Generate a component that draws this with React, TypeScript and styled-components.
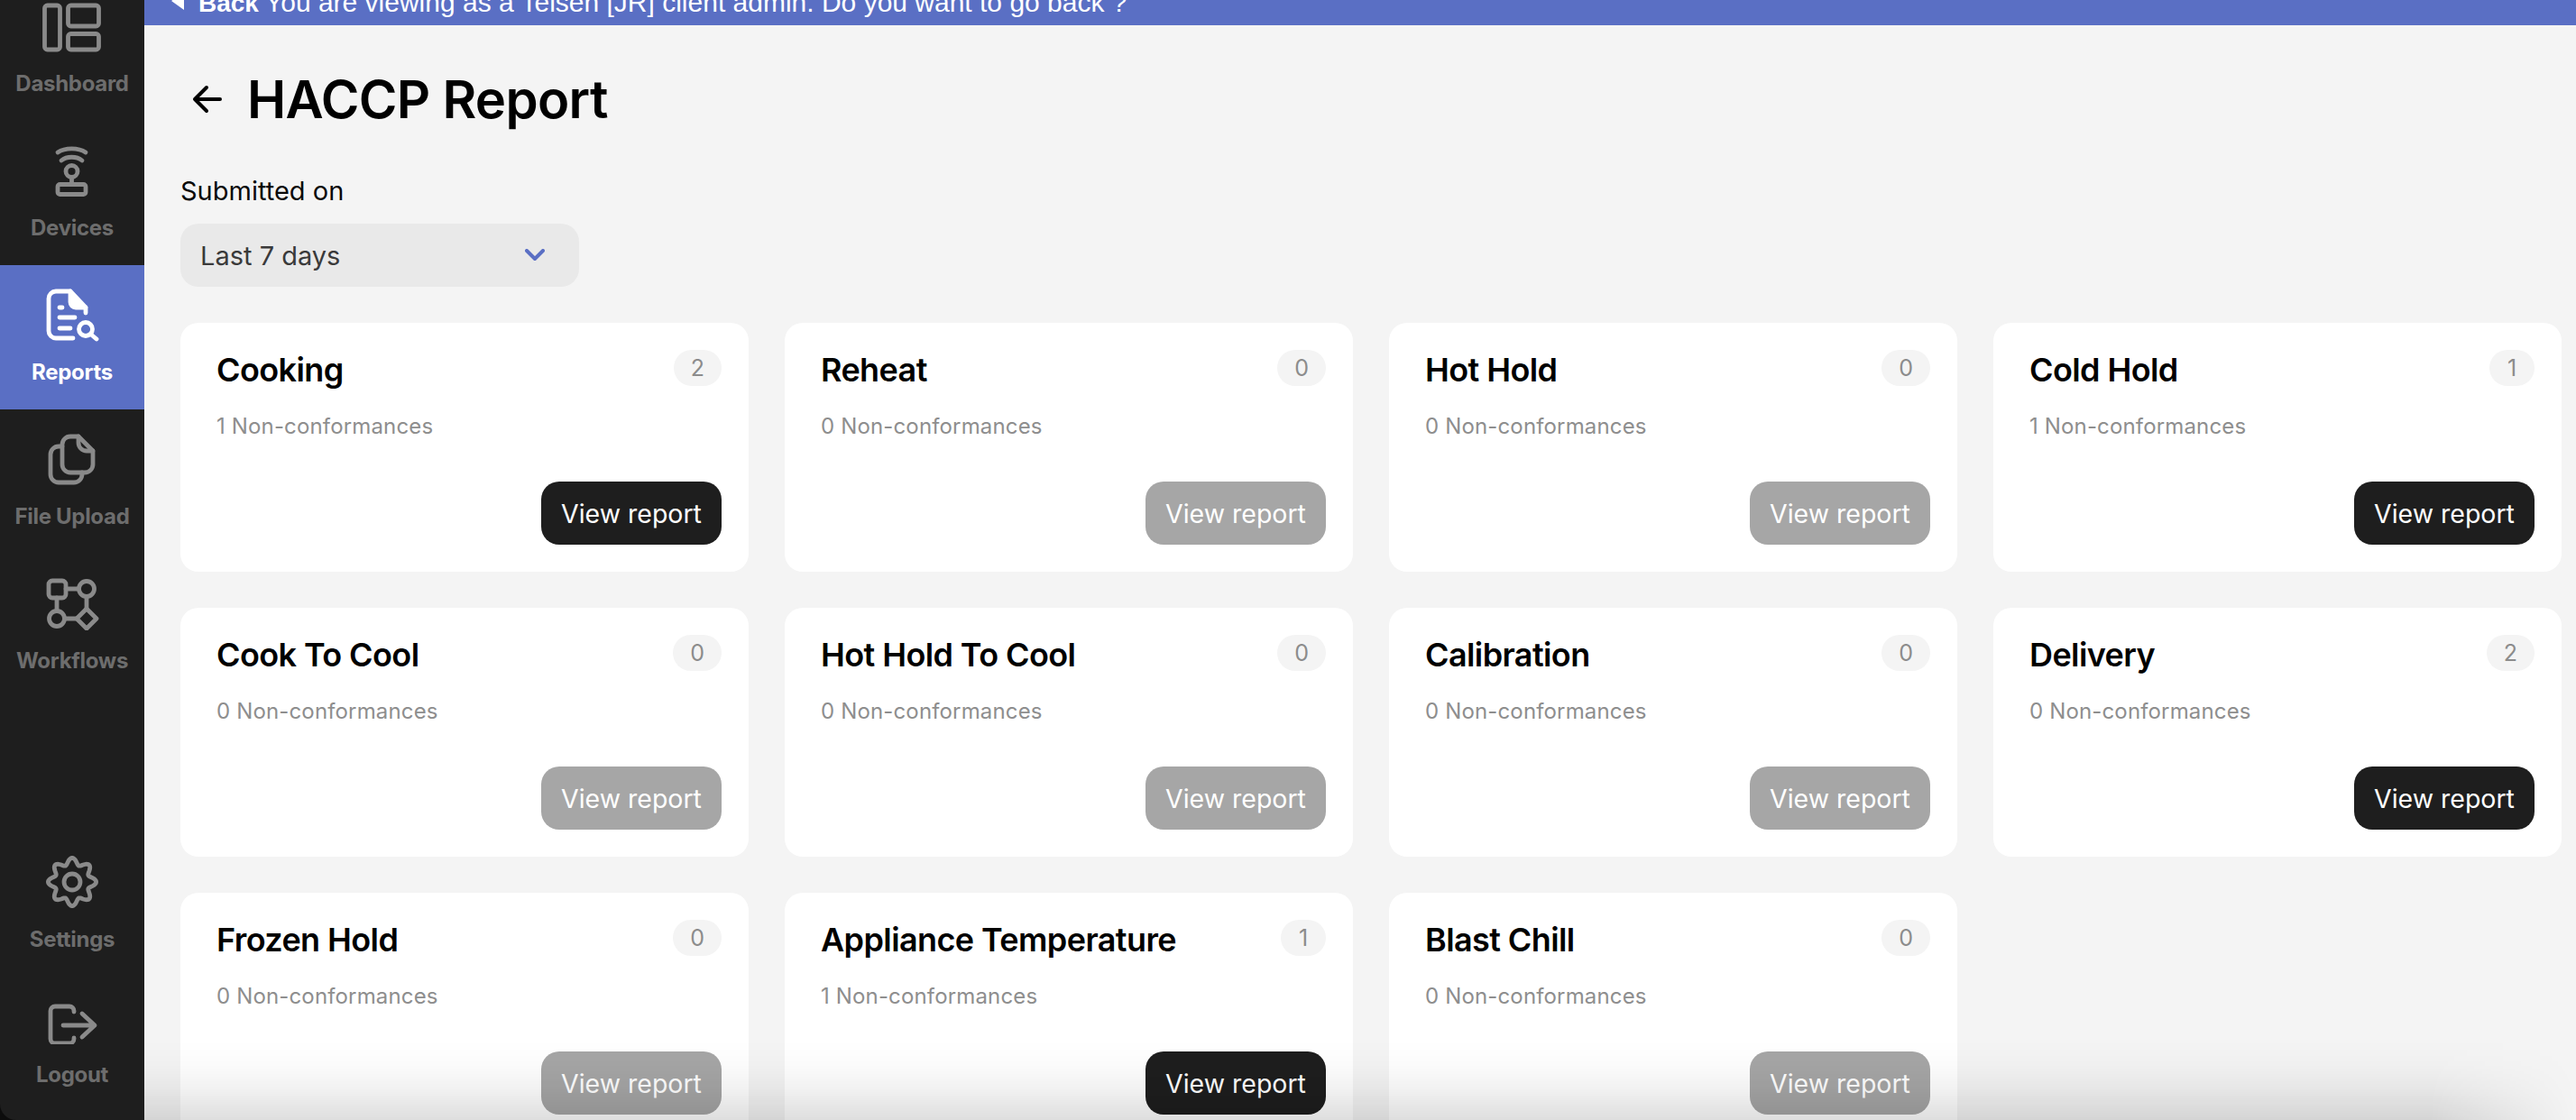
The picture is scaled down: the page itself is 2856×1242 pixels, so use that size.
import React from 'react'
import styled, { createGlobalStyle } from 'styled-components'

const GlobalStyle = createGlobalStyle`
	html, body {
		margin: 0;
		padding: 0;
		background: #0c0c0c;
	}
	* {
		box-sizing: border-box;
	}
`

const FONT = `Inter, "Noto Sans", sans-serif`

const StyledApp = styled.div`
	display: flex;
	width: 2856px;
	height: 1242px;
	overflow: hidden;
	position: relative;
	font-family: ${FONT};
`
const StyledSidebar = styled.nav`
	display: flex;
	flex-direction: column;
	justify-content: space-between;
	flex: 0 0 160px;
	height: 1242px;
	background: #1e1e1e;
	border-bottom-left-radius: 18px;
	padding-bottom: 9px;
`
const StyledNavGroup = styled.div<{ $shift?: number }>`
	display: flex;
	flex-direction: column;
	margin-top: ${(props) => props.$shift || 0}px;
`
const StyledNavItem = styled.a<{ $active?: boolean }>`
	display: flex;
	flex-direction: column;
	align-items: center;
	gap: 18px;
	padding: 25px 0;
	background: ${(props) => (props.$active ? '#5a6fc4' : 'transparent')};
	color: ${(props) => (props.$active ? '#ffffff' : '#8a8a8a')};
`
const StyledNavLabel = styled.span<{ $active?: boolean }>`
	height: 32px;
	font-size: 24px;
	line-height: 32px;
	font-weight: 700;
	white-space: nowrap;
	letter-spacing: -0.3px;
	color: ${(props) => (props.$active ? '#ffffff' : '#6d6d6d')};
`
const StyledMain = styled.main`
	flex: 1;
	min-width: 0;
	background: #f4f4f4;
`
const StyledBanner = styled.div`
	display: flex;
	align-items: flex-end;
	gap: 16px;
	height: 60px;
	margin-top: -32px;
	padding: 0 0 8px 30px;
	background: #5a6fc4;
	color: #ffffff;
	font-family: "Liberation Sans", Arial, sans-serif;
	font-size: 30px;
	line-height: 32px;
	white-space: nowrap;
`
const StyledBannerBack = styled.b`
	font-size: 28px;
	font-weight: 700;
	margin-right: 7px;
`
const StyledTriangle = styled.span`
	width: 0;
	height: 0;
	margin-bottom: 9px;
	border-style: solid;
	border-width: 10px 14px 10px 0;
	border-color: transparent #ffffff transparent transparent;
`
const StyledContent = styled.div`
	padding: 50px 16px 0 40px;
`
const StyledHeader = styled.div`
	display: flex;
	align-items: center;
	gap: 27px;
	height: 64px;
	padding-left: 13px;
`
const StyledTitle = styled.h1`
	margin: 0;
	font-size: 58px;
	line-height: 64px;
	font-weight: 600;
	color: #000000;
	letter-spacing: -0.7px;
`
const StyledFilterLabel = styled.div`
	margin-top: 54px;
	height: 32px;
	font-size: 29px;
	line-height: 32px;
	color: #0a0a0a;
`
const StyledSelect = styled.div`
	display: flex;
	align-items: center;
	justify-content: space-between;
	width: 442px;
	height: 70px;
	margin-top: 20px;
	padding: 0 38px 0 22px;
	border-radius: 20px;
	background: #e9e9e9;
	color: #3a3a3a;
	font-size: 29px;
`
const StyledGrid = styled.div`
	display: grid;
	grid-template-columns: repeat(4, 630px);
	gap: 40px;
	margin-top: 40px;
`
const StyledCard = styled.section`
	display: flex;
	flex-direction: column;
	height: 276px;
	padding: 30px 30px 30px 40px;
	border-radius: 20px;
	background: #ffffff;
`
const StyledCardHead = styled.div`
	display: flex;
	align-items: flex-start;
	justify-content: space-between;
`
const StyledCardTitle = styled.h2`
	margin: 0;
	font-size: 36px;
	line-height: 44px;
	font-weight: 600;
	color: #000000;
	letter-spacing: -0.6px;
`
const StyledBadge = styled.span`
	display: flex;
	align-items: center;
	justify-content: center;
	min-width: 50px;
	height: 40px;
	padding: 0 19px;
	border-radius: 20px;
	background: #f4f4f4;
	color: #8c8c8c;
	font-size: 25px;
`
const StyledCardText = styled.div`
	margin-top: 26px;
	font-size: 24px;
	line-height: 30px;
	color: #8e8e8e;
	letter-spacing: 0.15px;
`
const StyledButton = styled.button<{ $disabled: boolean }>`
	align-self: flex-end;
	width: 200px;
	height: 70px;
	margin-top: auto;
	border: 0;
	border-radius: 20px;
	background: ${(props) => (props.$disabled ? '#a6a6a6' : '#1e1e1e')};
	color: #ffffff;
	font-family: ${FONT};
	font-size: 28.5px;
`
const StyledBottomFade = styled.div`
	position: absolute;
	left: 160px;
	right: 0;
	bottom: 0;
	height: 88px;
	pointer-events: none;
	background: linear-gradient(
		to bottom,
		rgba(0, 0, 0, 0),
		rgba(0, 0, 0, 0.015) 30%,
		rgba(0, 0, 0, 0.05) 60%,
		rgba(0, 0, 0, 0.13)
	);
	mask-image: linear-gradient(to right, #000 94%, transparent 100%);
`

const Icon: React.FC<{ height?: number; children: React.ReactNode }> = ({
	height = 60,
	children,
}) => (
	<svg
		width={70}
		height={height}
		viewBox={`0 0 70 ${height}`}
		fill="none"
		stroke="currentColor"
		strokeWidth={4.8}
		strokeLinecap="round"
		strokeLinejoin="round"
	>
		{children}
	</svg>
)

// wavy outline for the settings cog
const gearPath = () => {
	const points: string[] = []
	for (let i = 0; i < 240; i++) {
		const a = (i / 240) * Math.PI * 2
		const r = 23 + 3.6 * Math.cos(8 * a)
		const x = 35 + r * Math.sin(a)
		const y = 30 - r * Math.cos(a)
		points.push(`${x.toFixed(2)} ${y.toFixed(2)}`)
	}
	return `M${points.join('L')}Z`
}

const DashboardIcon = () => (
	<Icon>
		<rect x="4.5" y="7" width="17" height="49" rx="3" />
		<rect x="30.5" y="7" width="34" height="23" rx="3" />
		<rect x="30.5" y="38.500" width="34" height="17.500" rx="3" />
	</Icon>
)
const DevicesIcon = () => (
	<Icon>
		<path d="M19 10C27 4.500 42 4.500 50 10" />
		<path d="M23 19C29 14 40 14 46 19" />
		<circle cx="34.500" cy="31" r="6.500" />
		<path d="M34.500 38V45" />
		<rect x="19" y="45.500" width="31" height="11" rx="2.500" />
	</Icon>
)
const ReportsIcon = () => (
	<Icon>
		<path d="M36 56H17a8 8 0 0 1-8-8V12a8 8 0 0 1 8-8H33L50 22V28" />
		<path d="M33 4V16a6 6 0 0 0 6 6H50" />
		<path d="M34 6V20H49Z" fill="currentColor" strokeWidth={1} />
		<path d="M21 22H24" />
		<path d="M21 33H38" />
		<path d="M21 45H33" />
		<circle cx="50" cy="46" r="7.500" />
		<path d="M55.500 51.500L62 57" />
	</Icon>
)
const FileUploadIcon = () => (
	<Icon>
		<path d="M42 5H33a9 9 0 0 0-9 9V36a9 9 0 0 0 9 9H49a9 9 0 0 0 9-9V21Z" />
		<path d="M42 5V12a9 9 0 0 0 9 9H58" />
		<path d="M24 16H20a9 9 0 0 0-9 9V47a9 9 0 0 0 9 9H37a9 9 0 0 0 9-9V45" />
	</Icon>
)
const WorkflowsIcon = () => (
	<Icon>
		<rect x="9" y="5" width="19" height="19" rx="4" />
		<circle cx="51" cy="14" r="8.500" />
		<circle cx="18" cy="47" r="8.500" />
		<path d="M51 36L62 47L51 58L40 47Z" />
		<path d="M28 14H42M18 24V38M51 23V36M27 47H40" />
	</Icon>
)
const SettingsIcon = () => (
	<Icon>
		<path d={gearPath()} />
		<circle cx="35" cy="30" r="9" />
	</Icon>
)
const LogoutIcon = () => (
	<Icon height={50}>
		<path d="M37 14V13a5 5 0 0 0-5-5H16a5 5 0 0 0-5 5V44a5 5 0 0 0 5 5H32a5 5 0 0 0 5-5V43" />
		<path d="M25 29H59M46 16L60 29L46 42" />
	</Icon>
)

interface INavEntry {
	label: string
	icon: React.ReactNode
	active?: boolean
}

const topNav: INavEntry[] = [
	{ label: 'Dashboard', icon: <DashboardIcon /> },
	{ label: 'Devices', icon: <DevicesIcon /> },
	{ label: 'Reports', icon: <ReportsIcon />, active: true },
	{ label: 'File Upload', icon: <FileUploadIcon /> },
	{ label: 'Workflows', icon: <WorkflowsIcon /> },
]
const bottomNav: INavEntry[] = [
	{ label: 'Settings', icon: <SettingsIcon /> },
	{ label: 'Logout', icon: <LogoutIcon /> },
]

const reports = [
	{ name: 'Cooking', count: 2, issues: 1 },
	{ name: 'Reheat', count: 0, issues: 0 },
	{ name: 'Hot Hold', count: 0, issues: 0 },
	{ name: 'Cold Hold', count: 1, issues: 1 },
	{ name: 'Cook To Cool', count: 0, issues: 0 },
	{ name: 'Hot Hold To Cool', count: 0, issues: 0 },
	{ name: 'Calibration', count: 0, issues: 0 },
	{ name: 'Delivery', count: 2, issues: 0 },
	{ name: 'Frozen Hold', count: 0, issues: 0 },
	{ name: 'Appliance Temperature', count: 1, issues: 1 },
	{ name: 'Blast Chill', count: 0, issues: 0 },
]

const NavItems: React.FC<{ items: INavEntry[] }> = ({ items }) => (
	<>
		{items.map((item) => (
			<StyledNavItem key={item.label} $active={item.active}>
				{item.icon}
				<StyledNavLabel $active={item.active}>{item.label}</StyledNavLabel>
			</StyledNavItem>
		))}
	</>
)

export default function App() {
	return (
		<StyledApp>
			<GlobalStyle />
			<StyledSidebar>
				<StyledNavGroup $shift={-26}>
					<NavItems items={topNav} />
				</StyledNavGroup>
				<StyledNavGroup>
					<NavItems items={bottomNav} />
				</StyledNavGroup>
			</StyledSidebar>
			<StyledMain>
				<StyledBanner>
					<StyledTriangle />
					<span>
						<StyledBannerBack>Back</StyledBannerBack>
						You are viewing as a Telsen [JR] client admin. Do you want to go back ?
					</span>
				</StyledBanner>
				<StyledContent>
					<StyledHeader>
						<svg width="34" height="34" viewBox="0 0 34 34" fill="none" stroke="#000" strokeWidth="4" strokeLinecap="round" strokeLinejoin="round">
							<path d="M31 17H4M16 4L3 17L16 30" />
						</svg>
						<StyledTitle>HACCP Report</StyledTitle>
					</StyledHeader>
					<StyledFilterLabel>Submitted on</StyledFilterLabel>
					<StyledSelect>
						Last 7 days
						<svg width="22" height="14" viewBox="0 0 22 14" fill="none" stroke="#5a6fc4" strokeWidth="4" strokeLinecap="round" strokeLinejoin="round">
							<path d="M2 2L11 11L20 2" />
						</svg>
					</StyledSelect>
					<StyledGrid>
						{reports.map((report) => (
							<StyledCard key={report.name}>
								<StyledCardHead>
									<StyledCardTitle>{report.name}</StyledCardTitle>
									<StyledBadge>{report.count}</StyledBadge>
								</StyledCardHead>
								<StyledCardText>{report.issues} Non-conformances</StyledCardText>
								<StyledButton $disabled={report.count === 0}>View report</StyledButton>
							</StyledCard>
						))}
					</StyledGrid>
				</StyledContent>
			</StyledMain>
			<StyledBottomFade />
		</StyledApp>
	)
}
